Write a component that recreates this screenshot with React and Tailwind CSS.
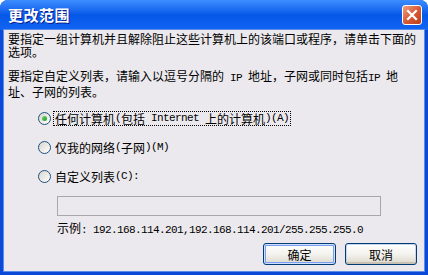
import React from "react";

// Splits text into CJK runs and half-width ASCII runs, like SimSun 12px
function Mix({ text }) {
  const parts = text.split(/([\x20-\x7e]+)/);
  return (
    <>
      {parts.map((p, i) =>
        i % 2 === 1 ? (
          <span
            key={i}
            className="font-['Liberation_Mono',monospace] text-[11px] tracking-[-0.6px] whitespace-pre"
          >
            {p}
          </span>
        ) : (
          <span key={i}>{p}</span>
        )
      )}
    </>
  );
}

function Radio({ checked }) {
  return (
    <span className="flex items-center justify-center w-[13px] h-[13px] rounded-full border border-[#1c5180] bg-gradient-to-br from-[#d8d5cc] to-white shrink-0">
      {checked && (
        <span className="w-[5px] h-[5px] rounded-full bg-gradient-to-br from-[#6fd66f] to-[#1a9a1a]" />
      )}
    </span>
  );
}

function Option({ checked, focused, label }) {
  return (
    <div className="flex items-center h-[15px] ml-[30px] gap-[2px]">
      <Radio checked={checked} />
      <span
        className={
          focused
            ? "h-[15px] flex items-center px-[1px] border border-dotted border-black"
            : "h-[15px] flex items-center px-[2px]"
        }
      >
        <Mix text={label} />
      </span>
    </div>
  );
}

function XpButton({ children, primary }) {
  return (
    <button
      className={
        primary
          ? "w-[73px] h-[22px] rounded-[3px] border border-[#003c74] bg-gradient-to-b from-white via-[#f4f3ee] to-[#dcd8cc] shadow-[inset_0_0_0_1px_#cfe0ff,inset_0_0_0_2px_#7b9ef0] text-[12px] text-black"
          : "w-[72px] h-[22px] rounded-[3px] border border-[#003c74] bg-gradient-to-b from-white via-[#f4f3ee] to-[#dcd8cc] shadow-[inset_0_-2px_0_#c9c2b4,inset_0_0_0_1px_#c6d4ee] text-[12px] text-black"
      }
    >
      {children}
    </button>
  );
}

export default function App() {
  return (
    <div className="w-[428px] h-[275px] flex flex-col rounded-t-[8px] overflow-hidden bg-[#0b4ad8] font-['Noto_Sans_CJK_SC',sans-serif] text-[12px] leading-[13px] text-black">
      {/* title bar */}
      <div className="h-[30px] shrink-0 flex items-center justify-between pl-[8px] pr-[6px] bg-gradient-to-b from-[#3d8dff] via-[#0557e8] to-[#1265f2]">
        <span className="text-white font-bold text-[15px] leading-[16px] tracking-[0.5px] [text-shadow:1px_1px_0_#0a1c8c]">
          更改范围
        </span>
        <span className="flex items-center justify-center w-[20px] h-[20px] rounded-[3px] border border-white bg-gradient-to-br from-[#f0a080] via-[#d65a36] to-[#c03d14]">
          <svg width="12" height="12" viewBox="0 0 12 12">
            <path d="M2 2 L10 10 M10 2 L2 10" stroke="white" strokeWidth="2.2" strokeLinecap="square" />
          </svg>
        </span>
      </div>

      {/* client area */}
      <div className="flex-1 mx-[4px] mb-[4px] bg-[#ebe9ed] flex flex-col pl-[4px] pr-[3px] pt-[2px] shadow-[0_0_0_1px_#5a8ce8]">
        <p>
          要指定一组计算机并且解除阻止这些计算机上的该端口或程序，请单击下面的
          <br />
          选项。
        </p>
        <p className="mt-[11px]">
          <Mix text="要指定自定义列表，请输入以逗号分隔的 IP 地址，子网或同时包括IP 地" />
          <br />
          址、子网的列表。
        </p>

        <div className="flex flex-col gap-[14px] mt-[13px]">
          <Option checked focused label="任何计算机(包括 Internet 上的计算机)(A)" />
          <Option label="仅我的网络(子网)(M)" />
          <Option label="自定义列表(C):" />
        </div>

        <div className="ml-[49px] mt-[12px] w-[324px] h-[20px] border border-[#a9a7ab] bg-[#ebe9ed]" />

        <div className="ml-[49px] mt-[5px]">
          <Mix text="示例: 192.168.114.201,192.168.114.201/255.255.255.0" />
        </div>

        <div className="flex justify-end gap-[9px] mt-[6px] pr-[4px]">
          <XpButton primary>确定</XpButton>
          <XpButton>取消</XpButton>
        </div>
      </div>
    </div>
  );
}
